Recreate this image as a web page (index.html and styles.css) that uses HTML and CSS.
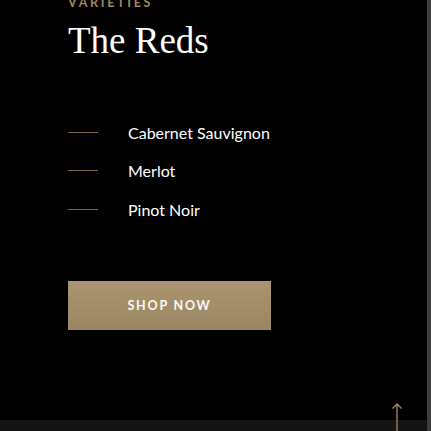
FILE: index.html
```html
<!DOCTYPE html>
<html>
<head>
<meta charset="utf-8">
<link rel="stylesheet" href="styles.css">
</head>
<body>
<div class="page">
  <main class="content">
    <section class="varieties">
      <p class="eyebrow">VARIETIES</p>
      <h1 class="title">The Reds</h1>
      <ul class="list">
        <li class="item"><span class="dash"></span><span class="name">Cabernet Sauvignon</span></li>
        <li class="item"><span class="dash"></span><span class="name">Merlot</span></li>
        <li class="item"><span class="dash"></span><span class="name">Pinot Noir</span></li>
      </ul>
      <a class="btn" href="#">SHOP NOW</a>
    </section>
  </main>
  <footer class="footer"></footer>
  <a class="to-top" href="#" aria-label="Back to top">
    <svg width="12" height="28" viewBox="0 0 12 28"><path d="M6 1V28M1.5 5.5L6 1l4.5 4.5" fill="none" stroke="#a08860" stroke-width="1.3"/></svg>
  </a>
</div>
</body>
</html>
```
FILE: styles.css
```css
html, body {
  margin: 0;
  padding: 0;
  background: #000;
  height: 100%;
  overflow: hidden;
}
.page {
  position: relative;
  height: 431px;
  display: flex;
  flex-direction: column;
  border-right: 4px solid #3d3d3d;
  box-sizing: border-box;
}
.content {
  flex: 1;
  padding-left: 68px;
}
.varieties {
  margin-top: -7px;
}
.eyebrow {
  margin: 0;
  font-family: Lato, sans-serif;
  font-weight: 700;
  font-size: 12.5px;
  line-height: 20px;
  letter-spacing: 2.7px;
  color: #a08860;
}
.title {
  margin: 6px 0 0;
  font-family: "Liberation Serif", serif;
  font-weight: 400;
  font-size: 37px;
  line-height: 44px;
  color: #fff;
}
.list {
  list-style: none;
  margin: 50px 0 0;
  padding: 0;
}
.item {
  display: flex;
  align-items: center;
  height: 38.5px;
}
.dash {
  width: 30px;
  height: 1px;
  background: #7a6647;
  margin-right: 30px;
}
.name {
  font-family: Lato, sans-serif;
  font-size: 16px;
  color: #fff;
}
.btn {
  display: flex;
  align-items: center;
  justify-content: center;
  width: 203px;
  height: 49px;
  margin-top: 52px;
  background: linear-gradient(#ab9570, #9a8663);
  color: #fbf8f2;
  font-family: Lato, sans-serif;
  font-weight: 700;
  font-size: 12.5px;
  letter-spacing: 1.8px;
  text-decoration: none;
}
.footer {
  height: 11px;
  background: #141414;
}
.to-top {
  position: absolute;
  right: 24px;
  bottom: 0;
  display: block;
  line-height: 0;
}
```
